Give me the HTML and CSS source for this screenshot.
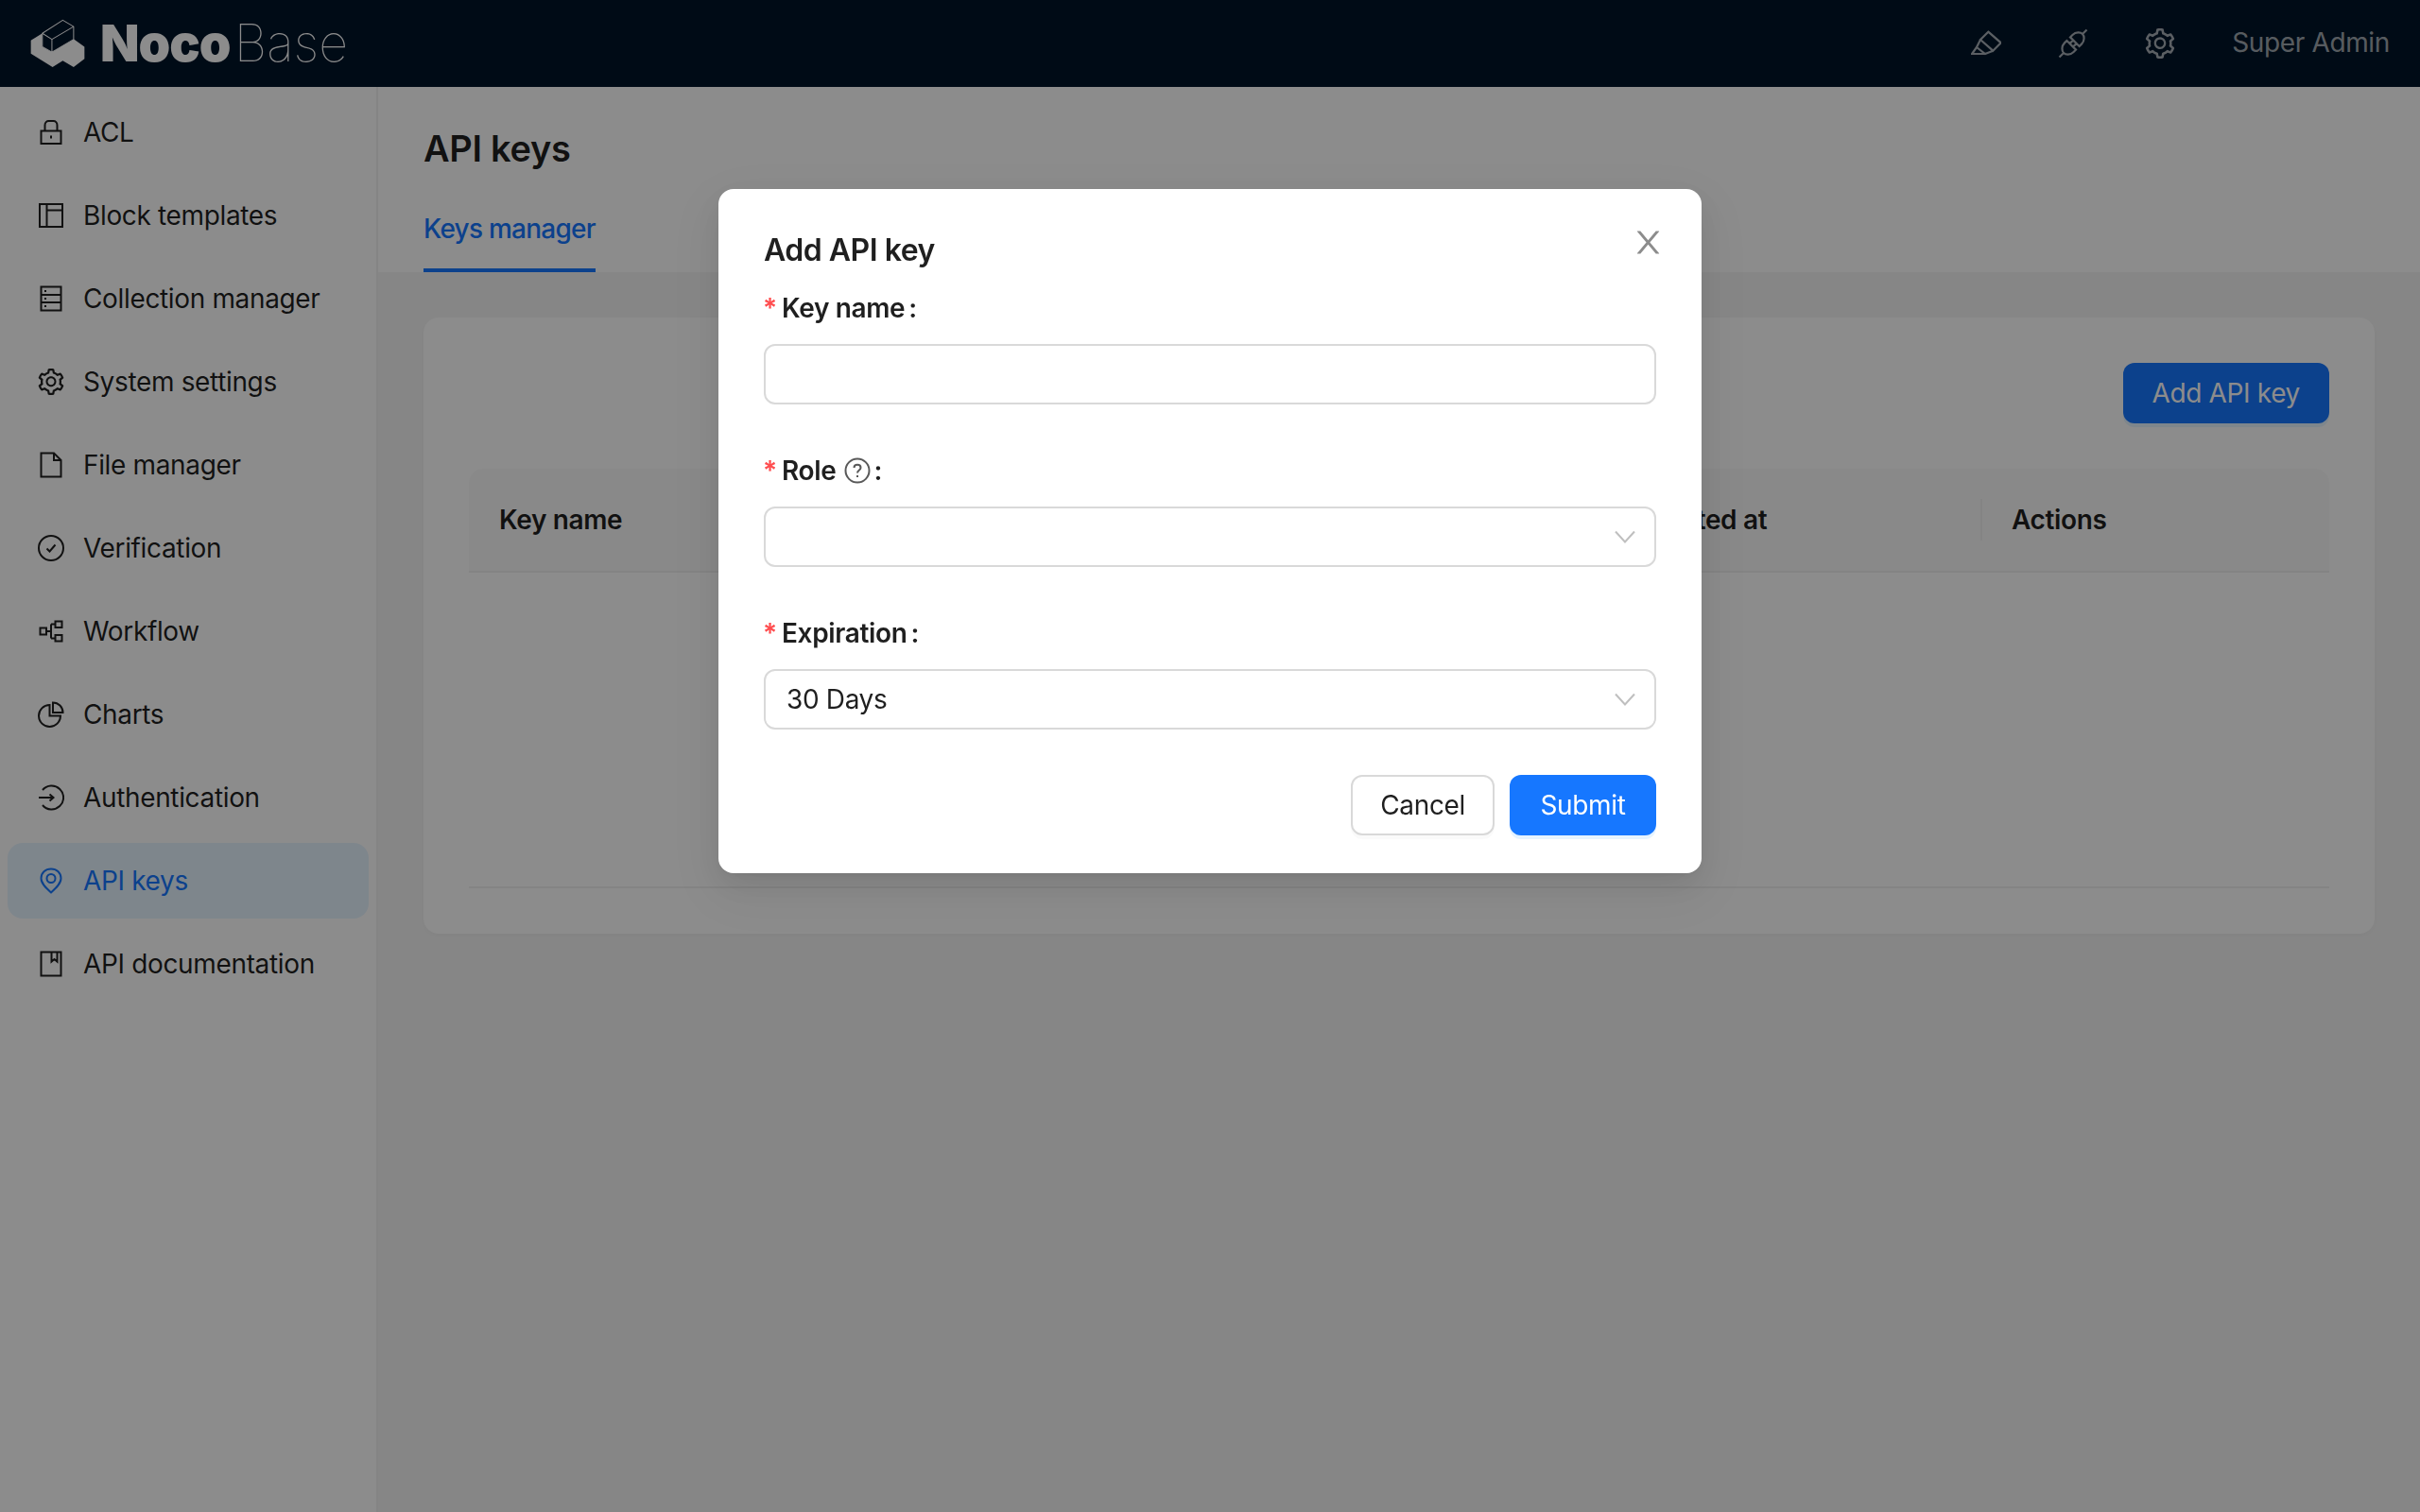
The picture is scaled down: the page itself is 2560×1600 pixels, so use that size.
FILE: index.html
```html
<!DOCTYPE html>
<html>
<head>
<title>API keys - NocoBase</title>
<meta charset="utf-8">
<link rel="stylesheet" href="styles.css">
</head>
<body>
	<svg class="defs">
		<symbol id="gear" viewBox="64 64 896 896"><path d="M924.8 625.7l-65.5-56c3.1-19 4.700-38.400 4.700-57.800s-1.600-38.800-4.700-57.800l65.500-56a32.030 32.030 0 009.300-35.200l-.9-2.600a443.740 443.740 0 00-79.700-137.900l-1.800-2.100a32.120 32.120 0 00-35.100-9.500l-81.300 28.900c-30-24.600-63.500-44-99.700-57.600l-15.700-85a32.050 32.050 0 00-25.800-25.700l-2.700-.5c-52.100-9.400-106.900-9.400-159 0l-2.700.5a32.050 32.050 0 00-25.800 25.700l-15.800 85.400a351.860 351.860 0 00-99 57.400l-81.900-29.100a32 32 0 00-35.100 9.500l-1.800 2.100a446.020 446.020 0 00-79.700 137.900l-.9 2.600c-4.500 12.500-.8 26.500 9.300 35.200l66.300 56.600c-3.100 18.800-4.600 38-4.600 57.100 0 19.200 1.500 38.400 4.600 57.100L99 625.500a32.030 32.030 0 00-9.300 35.200l.9 2.600c18.100 50.400 44.900 96.900 79.700 137.900l1.800 2.100a32.120 32.120 0 0035.100 9.500l81.900-29.100c29.800 24.500 63.100 43.900 99 57.400l15.800 85.400a32.050 32.050 0 0025.800 25.700l2.700.5a449.400 449.400 0 00159 0l2.700-.5a32.050 32.050 0 0025.800-25.700l15.700-85a350 350 0 0099.700-57.600l81.300 28.900a32 32 0 0035.100-9.500l1.800-2.100c34.800-41.100 61.600-87.500 79.700-137.900l.9-2.600c4.500-12.300.8-26.300-9.300-35zM788.300 465.900c2.500 15.100 3.800 30.600 3.800 46.100s-1.300 31-3.800 46.100l-6.600 40.100 74.700 63.900a370.030 370.030 0 01-42.600 73.600L721 702.800l-31.400 25.800c-23.900 19.600-50.500 35-79.300 45.800l-38.100 14.300-17.900 97a377.500 377.500 0 01-85 0l-17.900-97.200-37.800-14.500c-28.500-10.800-55-26.200-78.700-45.700l-31.400-25.900-93.400 33.200c-17-22.900-31.200-47.600-42.600-73.600l75.500-64.500-6.500-40c-2.400-14.900-3.700-30.300-3.700-45.500 0-15.300 1.200-30.600 3.700-45.500l6.500-40-75.500-64.500c11.300-26.100 25.600-50.700 42.600-73.600l93.400 33.200 31.400-25.900c23.700-19.500 50.200-34.900 78.700-45.700l37.900-14.300 17.900-97.200c28.100-3.200 56.800-3.200 85 0l17.900 97 38.100 14.300c28.700 10.800 55.400 26.200 79.300 45.800l31.400 25.800 92.800-32.900c17 22.900 31.200 47.600 42.600 73.600L781.800 426l6.500 39.900zM512 326c-97.200 0-176 78.800-176 176s78.800 176 176 176 176-78.800 176-176-78.800-176-176-176zm79.200 255.200A111.600 111.600 0 01512 614c-29.900 0-58-11.700-79.200-32.800A111.600 111.600 0 01400 502c0-29.900 11.700-58 32.800-79.200C454 401.600 482.100 390 512 390c29.900 0 58 11.600 79.200 32.800A111.600 111.600 0 01624 502c0 29.900-11.700 58-32.800 79.200z"/></symbol>
	</svg>

	<div class="app">
		<header class="topbar">
			<div class="logo">
				<svg class="logo-mark" viewBox="90 58 182 160">
					<path class="logo-solid" d="M97 128 L133 106 L133 148 L163 165 L232 125 L265 148 L265 186 L231 212 L197 192 L165 212 L97 170 Z"/>
					<path class="logo-box" d="M133 106 L197 65 L231 85 L231 125 L163 165 L133 148 Z M133 106 L163 125 L231 85 M163 125 V165"/>
				</svg>
				<span class="logo-text"><b>Noco</b><i>Base</i></span>
			</div>
			<div class="topbar-right">
				<button class="top-btn">
					<svg class="icon-32" viewBox="0 0 32 32"><path d="M18.300 3.700 L31.700 15.300 L23.300 23.700 L10 12 Z M10 12 L6 20 L15 27 L23.300 23.700 M6 20 L1 27 H15"/></svg>
				</button>
				<button class="top-btn">
					<svg class="icon-32" viewBox="0 0 32 32"><path d="M13 9.400 L22.600 19 L25 16.600 C28.500 13 28 8 26 6 C24 4 19 3.500 15.400 7 Z M19 22.600 L9.400 13 L7 15.400 C3.500 19 4 24 6 26 C8 28 13 28.500 16.600 25 Z M26.500 5.500 L30.500 1.500 M5.500 26.500 L1.500 30.500 M12.500 16.100 L16.100 12.500 M16 19.600 L19.600 16"/></svg>
				</button>
				<button class="top-btn">
					<svg class="icon-gear"><use href="#gear"/></svg>
				</button>
				<span class="top-user">Super Admin</span>
			</div>
		</header>

		<div class="layout">
			<nav class="sider">
				<a class="menu-item">
					<svg class="icon" viewBox="0 0 28 28"><path d="M3.500 12.500 H24.500 V26 H3.500 Z M7.500 12.500 V6.500 C7.500 3.500 9.500 2 11.500 2 H16.500 C18.500 2 20.500 3.500 20.500 6.500 V12.500 M14 17.500 V20.500"/></svg>
					ACL
				</a>
				<a class="menu-item">
					<svg class="icon" viewBox="0 0 28 28"><path d="M2 2 H26 V26 H2 Z M9.500 2 V26 M9.500 8.500 H26"/></svg>
					Block templates
				</a>
				<a class="menu-item">
					<svg class="icon" viewBox="0 0 28 28"><path d="M3.500 1.500 H24.500 V26.500 H3.500 Z M3.500 10 H24.500 M3.500 18 H24.500 M7 6 H9 M7 14 H9 M7 22 H9"/></svg>
					Collection manager
				</a>
				<a class="menu-item">
					<svg class="icon-gear"><use href="#gear"/></svg>
					System settings
				</a>
				<a class="menu-item">
					<svg class="icon" viewBox="0 0 28 28"><path d="M3.500 1.500 H17 L24.500 9 V26.500 H3.500 Z M17 1.500 V9 H24.500"/></svg>
					File manager
				</a>
				<a class="menu-item">
					<svg class="icon" viewBox="0 0 28 28"><circle cx="14" cy="14" r="13"/><path d="M9.500 14.500 L12.500 17.500 L18.500 10.500"/></svg>
					Verification
				</a>
				<a class="menu-item">
					<svg class="icon" viewBox="0 0 28 28"><path d="M2.500 10.500 H9 V17.500 H2.500 Z M18.500 3.500 H25.500 V10 H18.500 Z M18.500 18 H25.500 V24.500 H18.500 Z M9 14 H14 M14 6.500 V21.500 M14 6.500 H18.500 M14 21.500 H18.500"/></svg>
					Workflow
				</a>
				<a class="menu-item">
					<svg class="icon" viewBox="0 0 28 28"><path d="M12.500 4 A11.500 11.500 0 1 0 24 15.500 H12.500 Z M16 1.500 A10.500 10.500 0 0 1 26.500 12 H16 Z"/></svg>
					Charts
				</a>
				<a class="menu-item">
					<svg class="icon" viewBox="0 0 28 28"><path d="M5 6 A12.500 12.500 0 1 1 5 22 M1 14 H16.500 M12.500 10.500 L16.500 14 L12.500 17.500"/></svg>
					Authentication
				</a>
				<a class="menu-item menu-item-active">
					<svg class="icon" viewBox="0 0 28 28"><path d="M14 26.500 C9 22 3.500 17 3.500 11.500 C3.500 5.500 8 1.500 14 1.500 C20 1.500 24.500 5.500 24.500 11.500 C24.500 17 19 22 14 26.500 Z"/><circle cx="14" cy="11.500" r="4.500"/></svg>
					API keys
				</a>
				<a class="menu-item">
					<svg class="icon" viewBox="0 0 28 28"><path d="M3.500 1.500 H24.500 V26.500 H3.500 Z M14.500 1.500 V11.500 L17.500 9 L20.500 11.500 V1.500"/></svg>
					API documentation
				</a>
			</nav>

			<main class="main">
				<div class="page-head">
					<h1 class="page-title">API keys</h1>
					<div class="tabs">
						<span class="tab-active">Keys manager</span>
					</div>
				</div>
				<section class="card">
					<div class="toolbar">
						<button class="btn btn-primary">Add API key</button>
					</div>
					<div class="table">
						<div class="table-head">
							<div class="th th-name">Key name</div>
							<div class="th th-role">Role</div>
							<div class="th th-created">Created at</div>
							<div class="th th-actions">Actions</div>
						</div>
					</div>
				</section>
			</main>
		</div>
	</div>

	<!-- add key dialog -->
	<div class="mask">
		<div class="modal">
			<svg class="modal-close" viewBox="64 64 896 896"><path d="M563.8 512l262.5-312.900c4.400-5.200.7-13.100-6.100-13.100h-79.800c-4.700 0-9.200 2.100-12.300 5.700L511.600 449.800 295.100 191.700c-3-3.600-7.500-5.700-12.300-5.700H203c-6.800 0-10.500 7.900-6.100 13.100L459.400 512 196.900 824.900A7.950 7.950 0 00203 838h79.800c4.700 0 9.200-2.100 12.300-5.700l216.500-258.100 216.500 258.100c3 3.600 7.500 5.700 12.300 5.700h79.800c6.800 0 10.500-7.900 6.100-13.100L563.800 512z"/></svg>
			<h2 class="modal-title">Add API key</h2>

			<div class="form-item">
				<label class="form-label"><span class="req">*</span>Key name<span class="colon">:</span></label>
				<input class="input" type="text">
			</div>

			<div class="form-item">
				<label class="form-label">
					<span class="req">*</span>Role
					<svg class="help" viewBox="0 0 28 28"><circle cx="14" cy="14" r="12.500"/><path d="M10.500 11 C10.500 9 12 7.800 14 7.800 C16 7.800 17.500 9 17.500 11 C17.500 13.500 14 13.500 14 16.500 M14 19 V21"/></svg>
					<span class="colon">:</span>
				</label>
				<div class="select">
					<span></span>
					<svg class="caret" viewBox="0 0 22 14"><path d="M1 1.500 L11 12.500 L21 1.500"/></svg>
				</div>
			</div>

			<div class="form-item">
				<label class="form-label"><span class="req">*</span>Expiration<span class="colon">:</span></label>
				<div class="select">
					<span>30 Days</span>
					<svg class="caret" viewBox="0 0 22 14"><path d="M1 1.500 L11 12.500 L21 1.500"/></svg>
				</div>
			</div>

			<div class="modal-footer">
				<button class="btn btn-default">Cancel</button>
				<button class="btn btn-primary btn-submit">Submit</button>
			</div>
		</div>
	</div>
</body>
</html>
```

FILE: styles.css
```css
* { box-sizing: border-box; }

body {
	margin: 0;
	height: 1600px;
	overflow: hidden;
	font-family: Inter, "Noto Sans", "Liberation Sans", sans-serif;
	font-size: 28px;
	letter-spacing: -0.35px;
	color: rgba(0, 0, 0, 0.88);
	background: #f5f5f5;
}

.defs { display: none; }

.app { display: flex; flex-direction: column; height: 100%; }

/* top bar */
.topbar {
	display: flex;
	justify-content: space-between;
	align-items: center;
	height: 92px;
	background: #001529;
	color: rgba(255, 255, 255, 0.65);
}

.logo { display: flex; align-items: center; padding-left: 30px; gap: 14px; }
.logo-mark { width: 62px; height: 54px; }
.logo-solid { fill: #fff; }
.logo-box { fill: #001529; stroke: #fff; stroke-width: 3; stroke-linejoin: round; }
.logo-text { font-size: 54px; line-height: 60px; color: #fff; letter-spacing: -1px; }
.logo-text b { font-weight: 900; }
.logo-text i { font-style: normal; font-weight: 100; margin-left: 4px; letter-spacing: 0; }

.topbar-right { display: flex; align-items: center; padding-right: 32px; }
.top-btn {
	display: flex;
	align-items: center;
	justify-content: center;
	width: 92px;
	height: 92px;
	padding: 0;
	border: none;
	background: none;
	color: inherit;
}
.top-user { margin-left: 30px; padding-bottom: 2px; }

.icon, .icon-32, .caret, .help {
	fill: none;
	stroke: currentColor;
	flex: none;
}
.icon { width: 28px; height: 28px; stroke-width: 2; }
.icon-32 { width: 32px; height: 32px; stroke-width: 2.2; }
.icon-gear { width: 28px; height: 28px; fill: currentColor; flex: none; }
.top-btn .icon-gear { width: 32px; height: 32px; }

/* sidebar */
.layout { display: flex; flex: 1; }

.sider {
	display: flex;
	flex-direction: column;
	gap: 8px;
	width: 400px;
	padding: 8px;
	background: #fff;
	border-right: 2px solid #f0f0f0;
}

.menu-item {
	display: flex;
	align-items: center;
	gap: 20px;
	height: 80px;
	padding-left: 32px;
	border-radius: 16px;
	width: 382px;
}

.menu-item-active { background: #e6f4ff; color: #1677ff; }

/* page */
.main { flex: 1; }

.page-head { height: 196px; padding: 33px 48px 0; background: #fff; }
.page-title { margin: 0; font-size: 38px; line-height: 64px; font-weight: 600; letter-spacing: -0.3px; }
.tabs { display: flex; margin-top: 9px; }
.tab-active {
	height: 90px;
	padding-top: 24px;
	line-height: 40px;
	color: #1677ff;
	font-weight: 500;
	letter-spacing: -0.75px;
	border-bottom: 4px solid #1677ff;
}

.card {
	margin: 48px 48px 0;
	padding: 48px;
	height: 652px;
	background: #fff;
	border-radius: 16px;
	box-shadow: 0 2px 6px rgba(0, 0, 0, 0.03);
}

.toolbar { display: flex; justify-content: flex-end; margin-bottom: 48px; }

.btn {
	height: 64px;
	padding: 0 29px;
	font: inherit;
	letter-spacing: inherit;
	border-radius: 12px;
	border: 2px solid transparent;
}
.btn-primary { background: #1677ff; color: #fff; box-shadow: 0 4px 0 rgba(5, 145, 255, 0.1); }
.btn-default { background: #fff; border-color: #d9d9d9; color: rgba(0, 0, 0, 0.88); box-shadow: 0 4px 0 rgba(0, 0, 0, 0.02); }
.btn-submit { width: 155px; padding: 0; }

.table {
	height: 444px;
	border-bottom: 2px solid #f0f0f0;
}
.table-head {
	display: flex;
	height: 110px;
	background: #fafafa;
	border-bottom: 2px solid #f0f0f0;
	border-radius: 16px 16px 0 0;
}
.th {
	display: flex;
	align-items: center;
	padding-left: 32px;
	font-weight: 600;
	position: relative;
}
.th-name { width: 604px; }
.th-role { width: 600px; }
.th-created { width: 396px; }
.th-actions { flex: 1; }
.th-actions::before {
	content: "";
	position: absolute;
	left: -1px;
	top: 32px;
	height: 44px;
	width: 2px;
	background: #f0f0f0;
}

/* dialog */
.mask {
	position: fixed;
	inset: 0;
	display: flex;
	justify-content: center;
	align-items: flex-start;
	padding-top: 200px;
	background: rgba(0, 0, 0, 0.45);
}

.modal {
	position: relative;
	width: 1040px;
	height: 724px;
	padding: 43px 48px 40px;
	background: #fff;
	border-radius: 16px;
	box-shadow: 0 12px 32px rgba(0, 0, 0, 0.08), 0 6px 12px -8px rgba(0, 0, 0, 0.12), 0 18px 56px 16px rgba(0, 0, 0, 0.05);
}

.modal-close {
	position: absolute;
	top: 40px;
	right: 40px;
	width: 33px;
	height: 33px;
	fill: rgba(0, 0, 0, 0.45);
}

.modal-title { margin: 0 0 17px; font-size: 32px; line-height: 44px; font-weight: 600; letter-spacing: -0.5px; }

.form-item { margin-bottom: 48px; }

.form-label {
	display: flex;
	align-items: center;
	height: 44px;
	margin-bottom: 16px;
	font-weight: 600;
}
.req { width: 19px; margin-left: -1px; margin-right: 1px; color: #ff4d4f; font-weight: 600; }
.colon { margin-left: 4px; }
.help { width: 28px; height: 28px; margin-left: 9px; margin-right: -1px; stroke: rgba(0, 0, 0, 0.65); stroke-width: 2; }

.input, .select {
	display: flex;
	align-items: center;
	justify-content: space-between;
	width: 944px;
	height: 64px;
	padding: 0 20px 0 22px;
	font: inherit;
	background: #fff;
	border: 2px solid #d9d9d9;
	border-radius: 12px;
}

.caret { width: 22px; height: 14px; stroke: rgba(0, 0, 0, 0.25); stroke-width: 2; }

.modal-footer { display: flex; justify-content: flex-end; gap: 16px; width: 944px; }
```
